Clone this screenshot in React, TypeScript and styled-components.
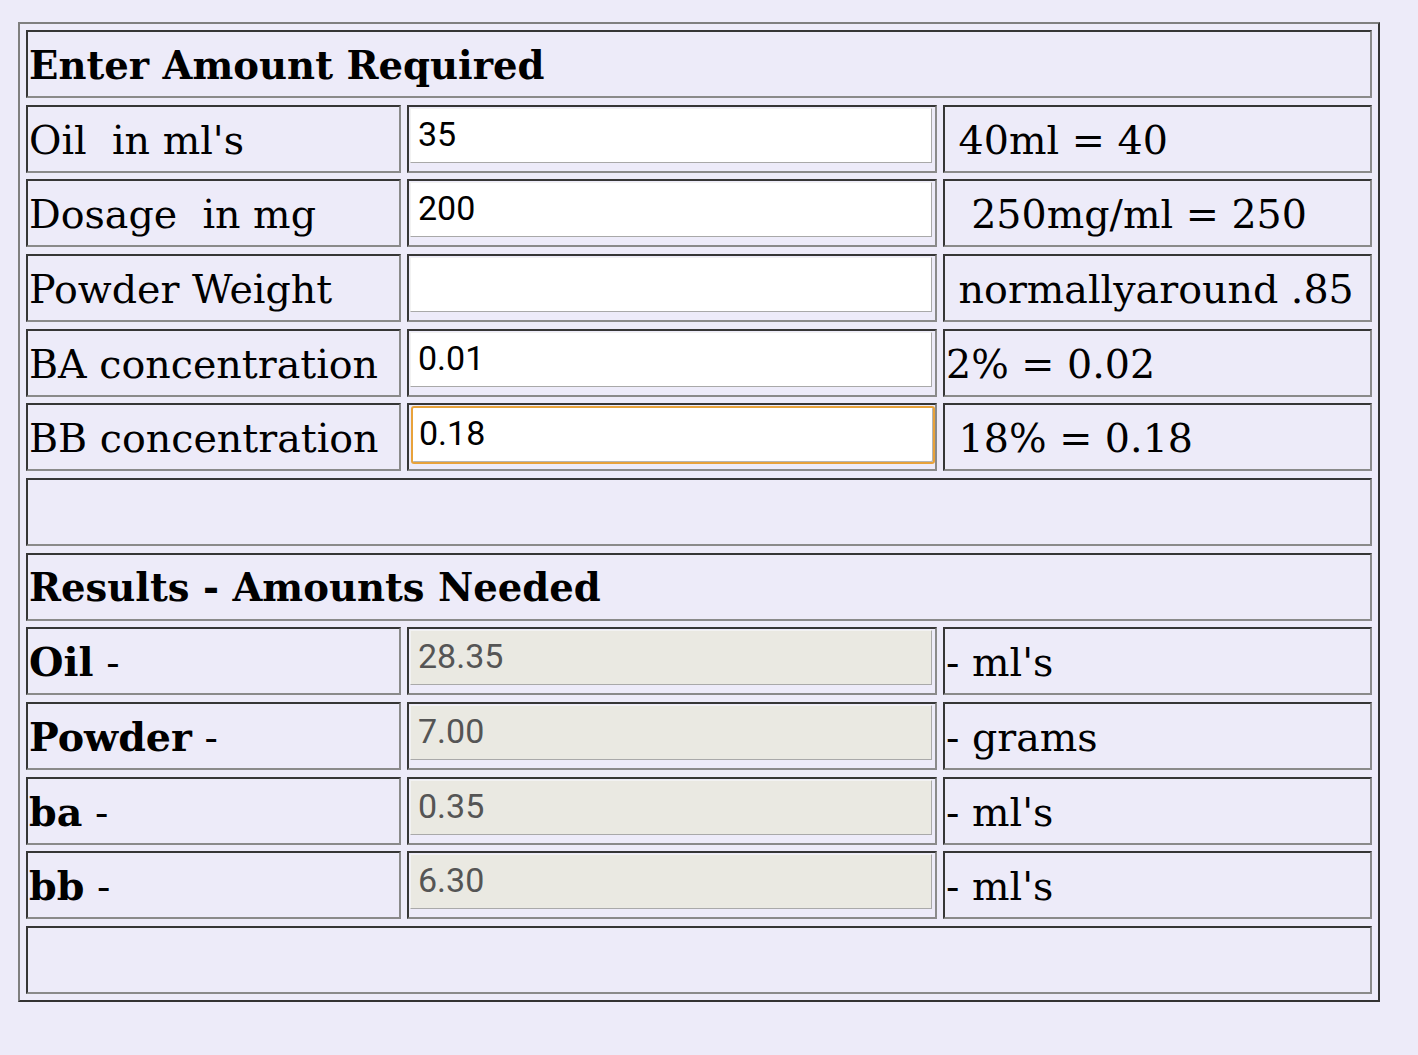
import React from "react";
import styled, { createGlobalStyle, css } from "styled-components";

const Global = createGlobalStyle`
  html, body {
    margin: 0;
    padding: 0;
    background: #edebf9;
  }
  body {
    font-family: "DejaVu Serif", "Liberation Serif", serif;
  }
`;

const Page = styled.div`
  padding: 22px 0 0 18px;
  min-height: 1055px;
  box-sizing: border-box;
`;

const Frame = styled.div`
  display: inline-grid;
  grid-template-columns: 375px 530px 429px;
  grid-auto-rows: 68px;
  column-gap: 6px;
  row-gap: 6.67px;
  padding: 6px;
  border-style: solid;
  border-width: 2px;
  border-color: #7f7f7f #333 #333 #7f7f7f;
`;

const Cell = styled.div<{ $span?: number; $bold?: boolean }>`
  grid-column: span ${(p) => p.$span ?? 1};
  box-sizing: border-box;
  border-style: solid;
  border-width: 2px;
  border-color: #363636 #8a8a8a #8a8a8a #363636;
  display: flex;
  align-items: center;
  padding: 2px 2px 0 1px;
  font-family: "DejaVu Serif", "Liberation Serif", serif;
  font-size: ${(p) => (p.$bold ? "38.6px" : "39.6px")};
  font-weight: ${(p) => (p.$bold ? 700 : 400)};
  color: #000;
  white-space: pre;
  overflow: hidden;
`;

const FieldCell = styled(Cell)`
  align-items: flex-start;
  padding: 1px 0 0 1px;
  overflow: visible;
`;

const Field = styled.input<{ $focused?: boolean; $result?: boolean }>`
  box-sizing: border-box;
  width: 522px;
  height: 55px;
  margin: 0;
  padding: 5px 7px 8px;
  font-family: Roboto, "Noto Sans", sans-serif;
  font-size: 34px;
  line-height: 40px;
  border-style: solid;
  border-width: 1px;
  border-color: #f2f2f2 #a9a9a9 #a9a9a9 #f2f2f2;
  border-radius: 0;
  background: ${(p) => (p.$result ? "#eae9e2" : "#fff")};
  color: ${(p) => (p.$result ? "#555" : "#000")};
  outline: none;
  ${(p) =>
    p.$focused &&
    css`
      width: 524px;
      height: 58px;
      margin: 0 0 0 1px;
      padding: 4px 6px 8px;
      border: 2px solid #e8a23a;
      border-radius: 3px;
      box-shadow: inset -1px -1px 0 #b5b5b5;
    `}
`;

const Strong = styled.b`
  font-weight: 700;
`;

type InputRow = { label: string; value: string; note: string; focused?: boolean };
type ResultRow = { label: string; value: string; unit: string };

const inputs: InputRow[] = [
  { label: "Oil  in ml's", value: "35", note: " 40ml = 40" },
  { label: "Dosage  in mg", value: "200", note: "  250mg/ml = 250" },
  { label: "Powder Weight", value: "", note: " normallyaround .85" },
  { label: "BA concentration", value: "0.01", note: "2% = 0.02" },
  { label: "BB concentration", value: "0.18", note: " 18% = 0.18", focused: true },
];

const results: ResultRow[] = [
  { label: "Oil", value: "28.35", unit: "- ml's" },
  { label: "Powder", value: "7.00", unit: "- grams" },
  { label: "ba", value: "0.35", unit: "- ml's" },
  { label: "bb", value: "6.30", unit: "- ml's" },
];

export default function App() {
  return (
    <Page>
      <Global />
      <Frame>
        <Cell $span={3} $bold>
          Enter Amount Required
        </Cell>
        {inputs.map((r) => (
          <React.Fragment key={r.label}>
            <Cell>{r.label}</Cell>
            <FieldCell>
              <Field defaultValue={r.value} $focused={r.focused} />
            </FieldCell>
            <Cell>{r.note}</Cell>
          </React.Fragment>
        ))}
        <Cell $span={3} />
        <Cell $span={3} $bold>
          Results - Amounts Needed
        </Cell>
        {results.map((r) => (
          <React.Fragment key={r.label}>
            <Cell>
              <Strong>{r.label}</Strong> -
            </Cell>
            <FieldCell>
              <Field value={r.value} readOnly $result />
            </FieldCell>
            <Cell>{r.unit}</Cell>
          </React.Fragment>
        ))}
        <Cell $span={3} />
      </Frame>
    </Page>
  );
}
